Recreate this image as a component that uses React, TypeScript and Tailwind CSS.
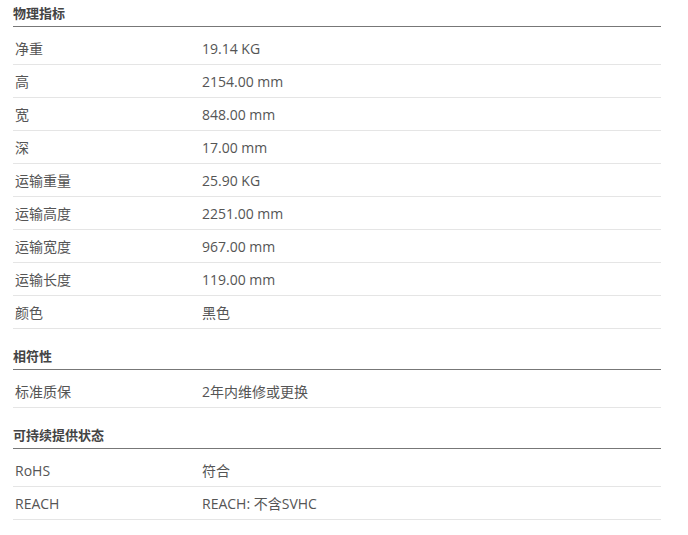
import React from "react";

type Row = [string, string];

interface Section {
  title: string;
  rows: Row[];
}

const sections: Section[] = [
  {
    title: "物理指标",
    rows: [
      ["净重", "19.14 KG"],
      ["高", "2154.00 mm"],
      ["宽", "848.00 mm"],
      ["深", "17.00 mm"],
      ["运输重量", "25.90 KG"],
      ["运输高度", "2251.00 mm"],
      ["运输宽度", "967.00 mm"],
      ["运输长度", "119.00 mm"],
      ["颜色", "黑色"],
    ],
  },
  {
    title: "相符性",
    rows: [["标准质保", "2年内维修或更换"]],
  },
  {
    title: "可持续提供状态",
    rows: [
      ["RoHS", "符合"],
      ["REACH", "REACH: 不含SVHC"],
    ],
  },
];

export default function App() {
  return (
    <div
      className="w-[688px] h-[535px] bg-white pl-[13px] pr-[27px]"
      style={{ fontFamily: '"Open Sans", "Noto Sans CJK SC", sans-serif' }}
    >
      {sections.map((section, i) => (
        <div key={section.title} className={i === 0 ? "" : "mt-[14px]"}>
          {/* 标题 */}
          <div className="h-[27px] pt-[4px] border-b border-[#777] text-[13px] leading-[18px] font-bold text-[#444]">
            {section.title}
          </div>
          <div className="mt-[5px]">
            {section.rows.map(([label, value]) => (
              <div
                key={label}
                className="flex items-center h-[33px] border-b border-[#e5e5e5] text-[14px] text-[#555]"
              >
                <div className="w-[189px] pl-[2px]">{label}</div>
                <div>{value}</div>
              </div>
            ))}
          </div>
        </div>
      ))}
    </div>
  );
}
